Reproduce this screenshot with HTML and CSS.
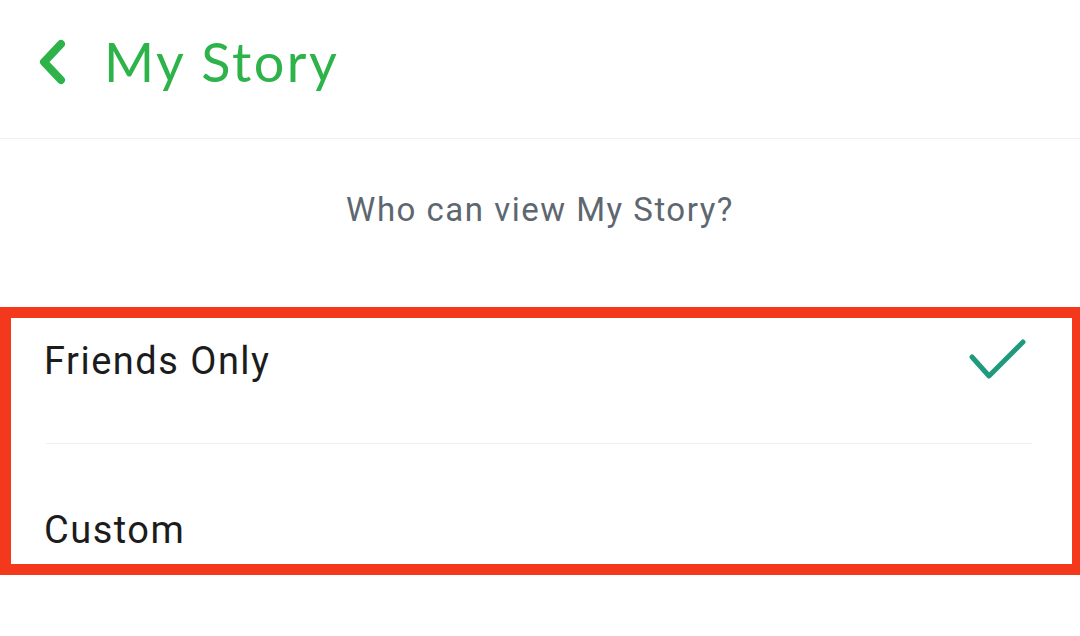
FILE: index.html
```html
<!DOCTYPE html>
<html lang="en">
<head>
  <meta charset="UTF-8" />
  <meta name="viewport" content="width=device-width, initial-scale=1.0" />
  <title>My Story</title>
  <link rel="stylesheet" href="styles.css">
</head>
<body>

  <header class="top-bar">
    <svg class="back-icon" width="32" height="48" viewBox="0 0 32 48">
      <polyline points="25,6 8,24 25,42" fill="none" stroke="#2db34a" stroke-width="8" stroke-linecap="round" stroke-linejoin="round" />
    </svg>
    <h1 class="title">My Story</h1>
  </header>

  <p class="question">Who can view My Story?</p>

  <div class="choice-box">
    <div class="choice first">
      <span class="choice-label">Friends Only</span>
      <svg class="check" width="62" height="44" viewBox="0 0 62 44">
        <polyline points="6,18 23,37 57,3" fill="none" stroke="#1f9a7e" stroke-width="5" stroke-linecap="round" stroke-linejoin="round" />
      </svg>
    </div>
    <div class="choice last">
      <span class="choice-label">Custom</span>
    </div>
  </div>

</body>
</html>
```

FILE: styles.css
```css
body {
  margin: 0;
  background: #fff;
  font-family: Roboto, "Noto Sans", Arial, sans-serif;
  overflow: hidden;
}

.top-bar {
  display: flex;
  align-items: center;
  padding: 32px 0 46px 36px;
  border-bottom: 1px solid #efefef;
}
.back-icon {
  margin-right: 36px;
  flex-shrink: 0;
}
.title {
  margin: 0;
  font-family: Lato, "Open Sans", sans-serif;
  font-weight: 400;
  font-size: 54px;
  line-height: 60px;
  letter-spacing: 2.5px;
  color: #2db34a;
}

.question {
  margin: 0;
  padding: 52px 0 78px;
  text-align: center;
  font-size: 33px;
  line-height: 38px;
  letter-spacing: 1.5px;
  color: #5e6770;
}

.choice-box {
  width: 1080px;
  border: 11px solid #f3381c;
  border-right-width: 8px;
  box-sizing: border-box;
}
.choice {
  display: flex;
  justify-content: space-between;
  align-items: flex-start;
  margin: 0 40px 0 35px;
  padding-right: 4px;
}
.choice.first {
  padding-top: 21px;
  padding-bottom: 60px;
  border-bottom: 1px solid #efefef;
}
.choice.last {
  padding-top: 64px;
  padding-bottom: 12px;
}
.choice-label {
  margin-left: -2px;
  font-size: 38px;
  line-height: 44px;
  letter-spacing: 1.5px;
  color: #1c1c1c;
}
.check {
  display: block;
}
```
